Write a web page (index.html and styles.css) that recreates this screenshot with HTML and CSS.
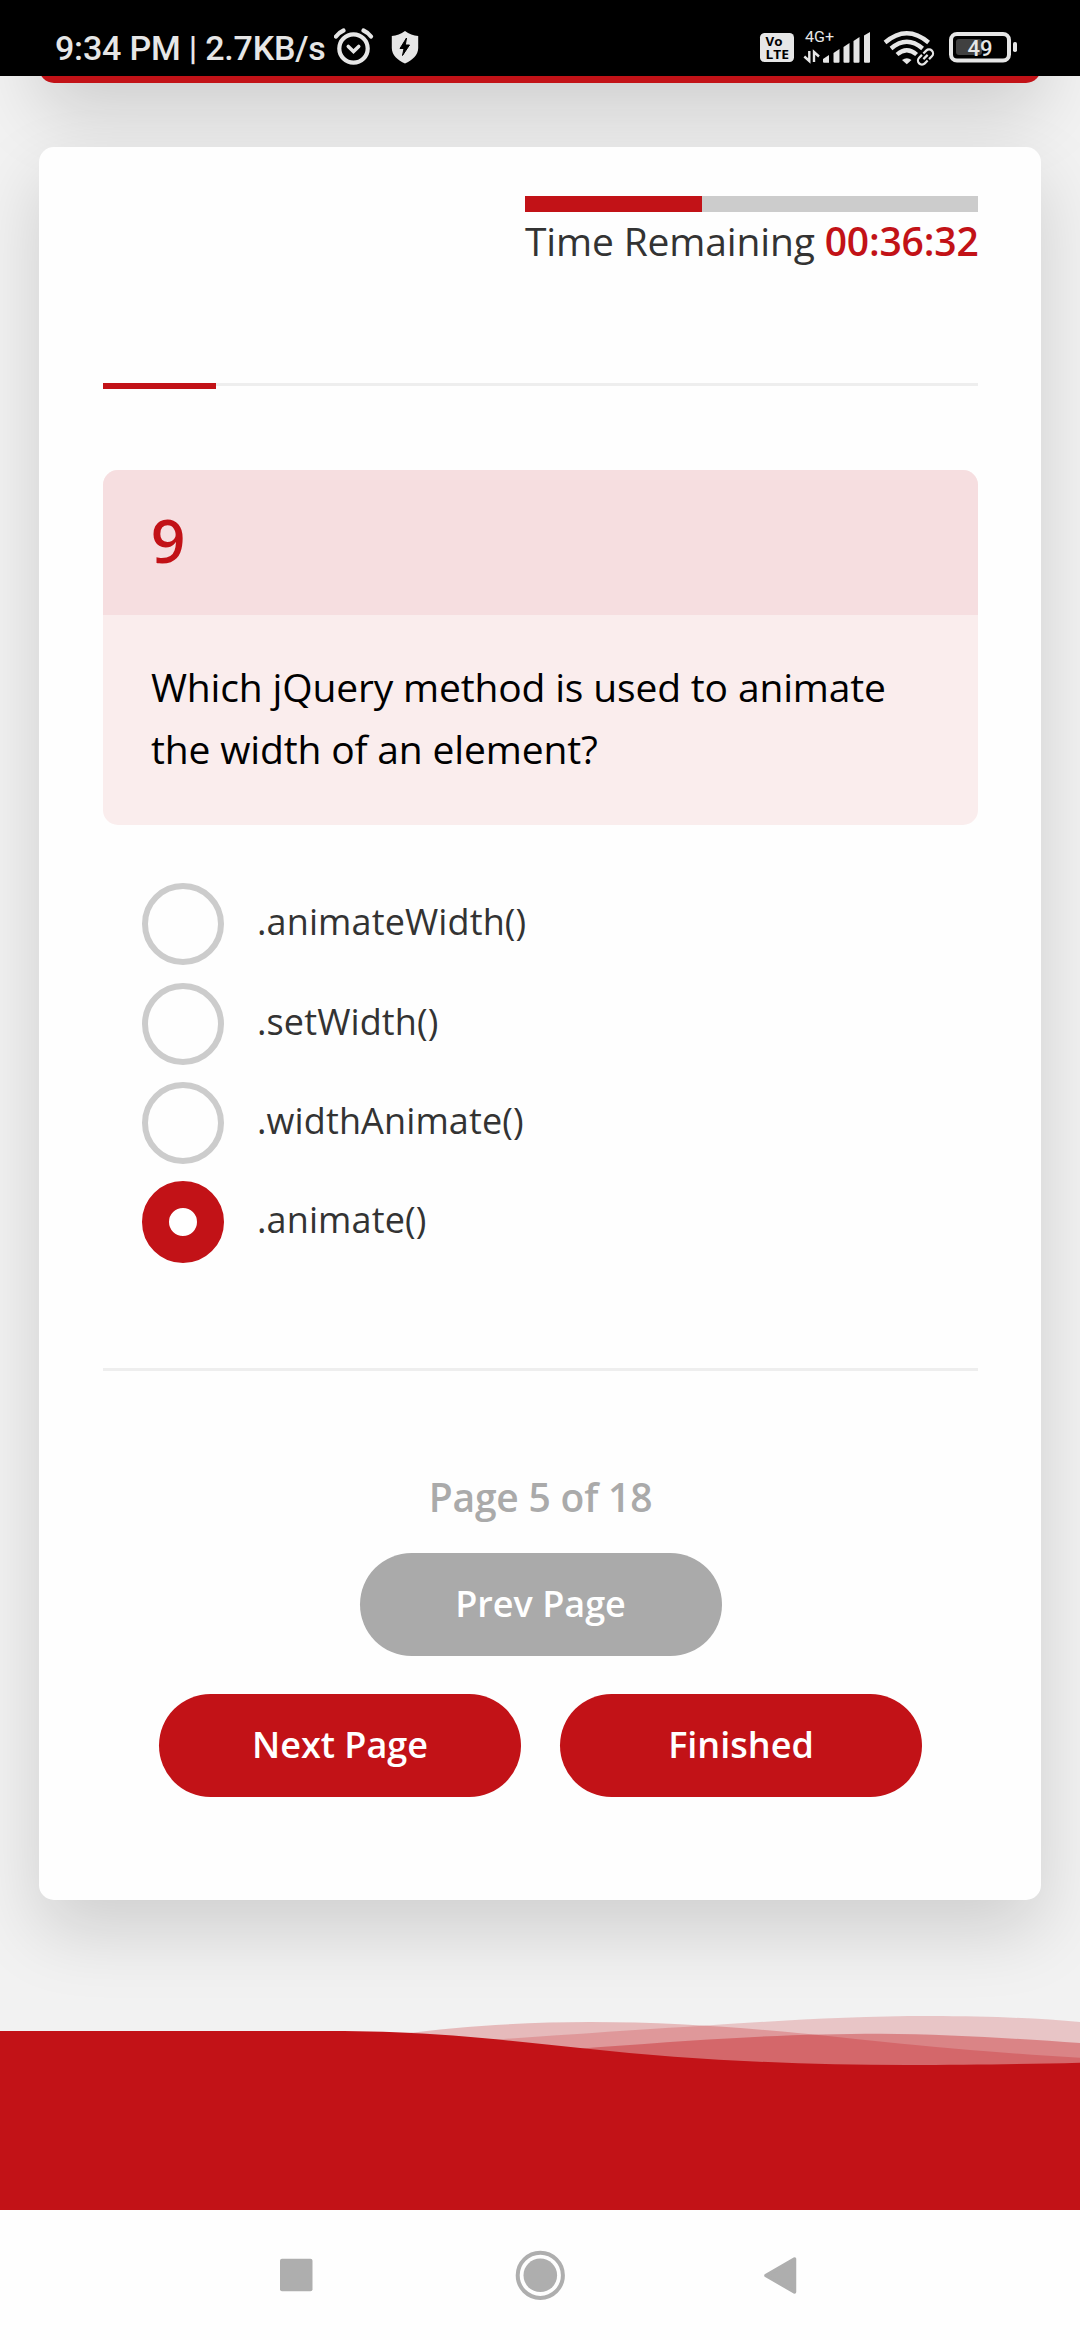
FILE: index.html
```html
<!DOCTYPE html>
<html lang="en">
<head>
<meta charset="utf-8">
<title>Quiz</title>
<link rel="stylesheet" href="styles.css">
</head>
<body>
<div class="screen">
  <header class="status">
    <span class="status-text">9:34 PM | 2.7KB/s</span>
    <svg class="alarm" width="40" height="76" viewBox="334 0 40 76" fill="none" stroke="#e6e6e6">
      <circle cx="353.5" cy="48.5" r="14.2" stroke-width="4.2"/>
      <path d="M348.3 46.5l5.2 5 5.2-5" stroke-width="3.6" stroke-linecap="round"/>
      <path d="M336 36.500q3-4 7.500-6M371 36.500q-3-4-7.500-6" stroke-width="4.200" stroke-linecap="round"/>
    </svg>
    <svg class="shield" width="28" height="76" viewBox="391 0 28 76">
      <path fill="#e6e6e6" d="M405 31c4 3 8.500 4.500 13.200 5v12c0 7-6 12.500-13.200 15.500c-7.200-3-13.200-8.500-13.200-15.500v-12c4.700-.5 9.200-2 13.200-5z"/>
      <path fill="#000" d="M406.500 38l-6.500 10.500h4l-1.500 7 7-10.500h-4.200z" stroke="#000" stroke-width="1"/>
    </svg>
    <svg class="signals" width="264" height="76" viewBox="756 0 264 76">
      <rect x="760" y="33" width="34" height="29" rx="4.500" fill="#e6e6e6"/>
      <text class="volte" x="765.500" y="46" textLength="17" lengthAdjust="spacingAndGlyphs">Vo</text>
      <text class="volte" x="765.500" y="58.500" textLength="23.500" lengthAdjust="spacingAndGlyphs">LTE</text>
      <text class="net" x="805" y="42" textLength="29" lengthAdjust="spacingAndGlyphs">4G+</text>
      <path d="M809.300 51v10l-5-4.500M814 62v-10l5 4.500" fill="none" stroke="#e6e6e6" stroke-width="2.400"/>
      <g fill="#e6e6e6">
        <path d="M823 59l6-4v7.700h-5q-1 0-1-1zM833.500 53l6-4v12.700q0 1-1 1h-4q-1 0-1-1zM843.500 47l6-4v18.700q0 1-1 1h-4q-1 0-1-1zM853.500 41l6-4v24.700q0 1-1 1h-4q-1 0-1-1zM864 35.500l6-3.500v29.700q0 1-1 1h-4q-1 0-1-1z"/>
        <path d="M902 60q5-3.500 9.500 0l-4.700 4.200z"/>
      </g>
      <g fill="none" stroke="#e6e6e6" stroke-width="4.300">
        <path d="M885 42.500q21.800-18.500 43.600 0M891 48.500q15.800-13.500 31.600 0M897 54.500q9.800-8.500 19.600 0"/>
        <g stroke-width="2.200" transform="rotate(-45 925.500 57)">
          <path d="M924.500 53h-4a4 4 0 0 0 0 8h4M926.500 61h4a4 4 0 0 0 0-8h-4M922.500 57h6"/>
        </g>
        <rect x="951" y="34" width="58" height="26.500" rx="6" stroke-width="4"/>
      </g>
      <rect x="956" y="39" width="26" height="16" rx="3" fill="#404040"/>
      <rect x="1013" y="42" width="4" height="10" rx="1.800" fill="#e6e6e6"/>
      <text class="level" x="967.500" y="55.500" textLength="25">49</text>
    </svg>
  </header>

  <main class="page">
    <div class="banner"></div>
    <section class="card">
      <div class="timer">
        <div class="timer-bar"><div class="timer-fill"></div></div>
        <div class="timer-text">Time Remaining <b>00:36:32</b></div>
      </div>
      <div class="progress"><div class="progress-fill"></div></div>
      <article class="question">
        <h2 class="number">9</h2>
        <p class="prompt">Which jQuery method is used to animate the width of an element?</p>
      </article>
      <ul class="options">
        <li class="option"><i class="radio"></i><span>.animateWidth()</span></li>
        <li class="option"><i class="radio"></i><span>.setWidth()</span></li>
        <li class="option"><i class="radio"></i><span>.widthAnimate()</span></li>
        <li class="option"><i class="radio checked"></i><span>.animate()</span></li>
      </ul>
      <div class="rule"></div>
      <div class="page-count">Page 5 of 18</div>
      <div class="buttons">
        <a class="btn muted">Prev Page</a>
        <a class="btn">Next Page</a>
        <a class="btn">Finished</a>
      </div>
    </section>
  </main>

  <footer class="footer">
    <svg width="1080" height="200" viewBox="0 2010 1080 200" fill="#c21217">
      <path opacity=".25" d="M380 2037C440 2028 515 2022 590 2022C700 2022 800 2033 880 2041.500S1020 2054 1080 2057.700V2100H380z"/>
      <path opacity=".2" d="M380 2047C480 2041 600 2032 698.700 2026C775 2021 850 2016 930 2016C990 2016 1040 2018.500 1080 2022V2100H380z"/>
      <path opacity=".36" d="M480 2056C560 2050 620 2045.500 689 2040.700C760 2036 820 2033.700 880 2033.700C950 2034 1020 2039 1080 2043V2100H480z"/>
      <path d="M0 2031H330C440 2031 510 2041 585 2048.500C690 2060 800 2065 906 2065C970 2065 1030 2064 1080 2062.700V2210H0z"/>
    </svg>
  </footer>

  <nav class="nav">
    <svg width="1080" height="130" viewBox="0 2210 1080 130" fill="#aeaeae">
      <rect x="280" y="2258.700" width="32.500" height="32.500" rx="2"/>
      <circle cx="540.300" cy="2275.300" r="22.600" fill="none" stroke="#aeaeae" stroke-width="4"/>
      <circle cx="540.300" cy="2275.300" r="16.800"/>
      <path d="M766 2275.500L794.500 2259v33z" stroke="#aeaeae" stroke-width="3.500" stroke-linejoin="round"/>
    </svg>
  </nav>
</div>
</body>
</html>
```
FILE: styles.css
```css
* { box-sizing: border-box; }
body {
  margin: 0;
  background: #f2f2f2;
  font-family: "Open Sans", sans-serif;
  color: #333;
}
.screen {
  width: 1080px;
  height: 2340px;
  overflow: hidden;
  display: flex;
  flex-direction: column;
}
svg { display: block; flex: none; }

.status {
  height: 76px;
  flex: none;
  background: #000;
  display: flex;
  padding-left: 55px;
  position: relative;
  z-index: 2;
}
.status-text {
  width: 279px;
  white-space: nowrap;
  font: 500 34px/96px Roboto, sans-serif;
  letter-spacing: -.2px;
  color: #e6e6e6;
}
.shield { margin-left: 17px; }
.signals { margin-left: 337px; }
.volte { font: 700 12px "Open Sans", sans-serif; fill: #000; }
.net { font: 400 15px Roboto, sans-serif; fill: #e6e6e6; }
.level { font: 500 22px Roboto, sans-serif; fill: #e6e6e6; }

.page {
  height: 1934px;
  flex: none;
  padding: 0 39px;
}
/* The banner is scrolled up under the status bar; only its lower edge shows. */
.banner {
  height: 307px;
  margin-top: -300px;
  margin-bottom: 64px;
  border-radius: 15px;
  background: #c21217;
  box-shadow: 0 30px 72px rgba(0, 0, 0, .15);
}
.card {
  height: 1753px;
  padding: 49px 63px 0 64px;
  border-radius: 15px;
  background: #fefefe;
  box-shadow: 0 30px 72px rgba(0, 0, 0, .15);
}
.timer {
  width: 453px;
  height: 187px;
  margin-left: auto;
}
.timer-bar { height: 16px; background: #ccc; }
.timer-fill { width: 39.1%; height: 100%; background: #c21217; }
.timer-text {
  margin-top: 2px;
  font-size: 39px;
  letter-spacing: -.16px;
  line-height: 53px;
  white-space: nowrap;
}
.timer-text b { font-weight: 600; color: #c21217; }
.progress {
  height: 3px;
  margin-bottom: 84px;
  background: #eee;
}
.progress-fill { width: 113px; height: 6px; background: #c21217; }

.question {
  height: 355px;
  border-radius: 15px;
  overflow: hidden;
  background: #faeded;
}
.number {
  height: 145px;
  margin: 0;
  padding-left: 48px;
  background: #f6dee0;
  color: #c21217;
  font-size: 60px;
  font-weight: 600;
  line-height: 141px;
}
.prompt {
  margin: 0;
  padding: 41px 48px 0;
  color: #000;
  font-size: 39px;
  letter-spacing: -.16px;
  line-height: 62px;
}
.options {
  height: 543px;
  margin: 0;
  padding: 58.3px 0 0 39px;
  list-style: none;
}
.option {
  display: flex;
  height: 99.35px;
  gap: 33px;
  font-size: 36px;
  letter-spacing: .12px;
  line-height: 77px;
}
.radio {
  width: 82px;
  height: 82px;
  border: 6px solid #ccc;
  border-radius: 50%;
}
.radio.checked { border: 27px solid #c21217; background: #fff; }
.rule { height: 3px; background: #eee; }
.page-count {
  margin-top: 99px;
  text-align: center;
  color: #aaa;
  font-size: 39px;
  font-weight: 600;
  letter-spacing: -.2px;
  line-height: 53px;
}
.buttons {
  display: flex;
  flex-wrap: wrap;
  justify-content: center;
  gap: 38px 39px;
  margin: 30px 50px 0;
}
.btn {
  width: 362px;
  height: 103px;
  border-radius: 52px;
  background: #c21217;
  color: #fff;
  text-align: center;
  font-size: 36px;
  font-weight: 600;
  line-height: 102px;
}
.muted { margin: 0 100px; background: #aaa; }
.footer { height: 200px; flex: none; }
.nav { height: 130px; flex: none; background: #fefefe; }
```
